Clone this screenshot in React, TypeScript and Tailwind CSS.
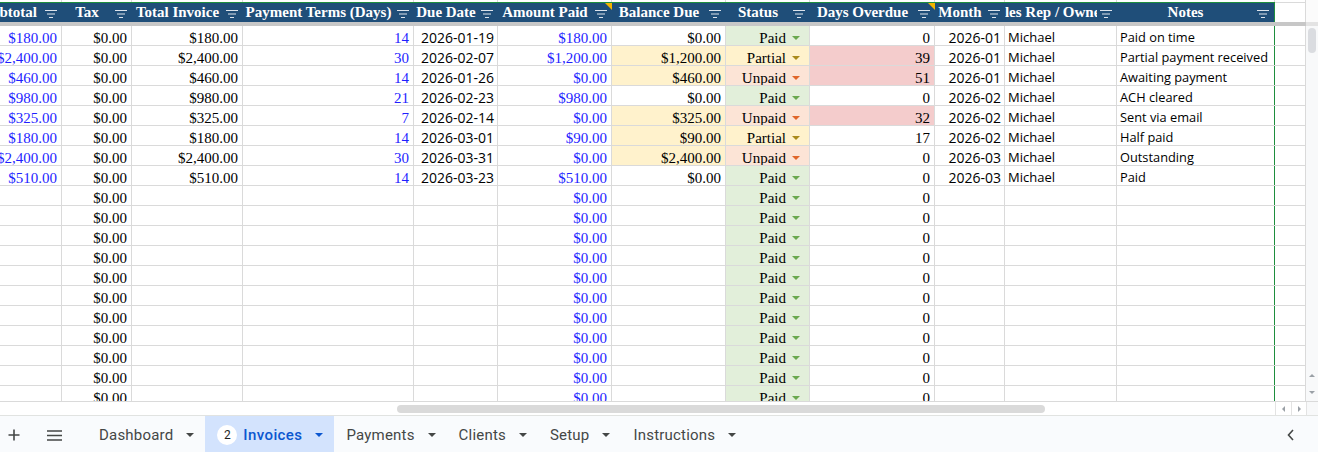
import React from "react";

const W = [
  "w-[62px]",
  "w-[70px]",
  "w-[111px]",
  "w-[171px]",
  "w-[84px]",
  "w-[114px]",
  "w-[114px]",
  "w-[84px]",
  "w-[125px]",
  "w-[70px]",
  "w-[112px]",
  "w-[158px]",
  "w-[31px]",
];

const SERIF = "font-['Liberation_Serif',serif]";
const SANS = "font-['Open_Sans',sans-serif]";
const BLUE = "text-[#1f1fff]";

type Status = "Paid" | "Partial" | "Unpaid";

type Row = {
  sub?: string;
  tax: string;
  total?: string;
  terms?: string;
  due?: string;
  paid: string;
  bal?: string;
  balHi?: boolean;
  status: Status;
  over: string;
  overHi?: boolean;
  month?: string;
  rep?: string;
  notes?: string;
};

const data: Row[] = [
  { sub: "$180.00", tax: "$0.00", total: "$180.00", terms: "14", due: "2026-01-19", paid: "$180.00", bal: "$0.00", status: "Paid", over: "0", month: "2026-01", rep: "Michael", notes: "Paid on time" },
  { sub: "$2,400.00", tax: "$0.00", total: "$2,400.00", terms: "30", due: "2026-02-07", paid: "$1,200.00", bal: "$1,200.00", balHi: true, status: "Partial", over: "39", overHi: true, month: "2026-01", rep: "Michael", notes: "Partial payment received" },
  { sub: "$460.00", tax: "$0.00", total: "$460.00", terms: "14", due: "2026-01-26", paid: "$0.00", bal: "$460.00", balHi: true, status: "Unpaid", over: "51", overHi: true, month: "2026-01", rep: "Michael", notes: "Awaiting payment" },
  { sub: "$980.00", tax: "$0.00", total: "$980.00", terms: "21", due: "2026-02-23", paid: "$980.00", bal: "$0.00", status: "Paid", over: "0", month: "2026-02", rep: "Michael", notes: "ACH cleared" },
  { sub: "$325.00", tax: "$0.00", total: "$325.00", terms: "7", due: "2026-02-14", paid: "$0.00", bal: "$325.00", balHi: true, status: "Unpaid", over: "32", overHi: true, month: "2026-02", rep: "Michael", notes: "Sent via email" },
  { sub: "$180.00", tax: "$0.00", total: "$180.00", terms: "14", due: "2026-03-01", paid: "$90.00", bal: "$90.00", balHi: true, status: "Partial", over: "17", month: "2026-02", rep: "Michael", notes: "Half paid" },
  { sub: "$2,400.00", tax: "$0.00", total: "$2,400.00", terms: "30", due: "2026-03-31", paid: "$0.00", bal: "$2,400.00", balHi: true, status: "Unpaid", over: "0", month: "2026-03", rep: "Michael", notes: "Outstanding" },
  { sub: "$510.00", tax: "$0.00", total: "$510.00", terms: "14", due: "2026-03-23", paid: "$510.00", bal: "$0.00", status: "Paid", over: "0", month: "2026-03", rep: "Michael", notes: "Paid" },
];
for (let i = 0; i < 11; i++) {
  data.push({ tax: "$0.00", paid: "$0.00", status: "Paid", over: "0" });
}

const statusBg: Record<Status, string> = {
  Paid: "bg-[#e2efda]",
  Partial: "bg-[#fff2cc]",
  Unpaid: "bg-[#fce4d6]",
};
const statusArrow: Record<Status, string> = {
  Paid: "#6aa84f",
  Partial: "#a98a1c",
  Unpaid: "#e0662a",
};

function FilterIcon() {
  return (
    <svg width="12" height="10" viewBox="0 0 12 10" className="block">
      <path d="M0 1.5h12M2 5h8M4 8.5h4" stroke="#dde4ec" strokeWidth="1.2" />
    </svg>
  );
}

function Tri({ color, w = 8, h = 4 }: { color: string; w?: number; h?: number }) {
  return (
    <svg width={w} height={h} viewBox={`0 0 ${w} ${h}`} className="block shrink-0">
      <path d={`M0 0H${w}L${w / 2} ${h}Z`} fill={color} />
    </svg>
  );
}

function HeaderCell({
  i,
  label,
  mode = "center",
  comment = false,
  shift = "",
}: {
  i: number;
  label: string;
  mode?: "center" | "end";
  comment?: boolean;
  shift?: string;
}) {
  const border = i === 11 ? "border-r border-[#1e8e3e]" : "";
  return (
    <div className={`${W[i]} ${border} shrink-0 h-full bg-[#1f4e79] flex items-center relative`}>
      <div
        className={`flex-1 min-w-0 h-full flex items-center overflow-hidden ${
          mode === "end" ? "justify-end pr-[5px]" : "justify-center"
        }`}
      >
        <span className={`whitespace-nowrap ${SERIF} font-bold text-[15px] text-white leading-none ${shift}`}>{label}</span>
      </div>
      <div className="w-[20px] shrink-0 pl-[3px] pt-[2px]">
        <FilterIcon />
      </div>
      {comment && (
        <svg width="7" height="7" viewBox="0 0 7 7" className="absolute top-0 right-0">
          <path d="M0 0H7V7Z" fill="#f4b400" />
        </svg>
      )}
    </div>
  );
}

function Cell({
  i,
  children,
  className = "",
}: {
  i: number;
  children?: React.ReactNode;
  className?: string;
}) {
  const border = i === 11 ? "border-[#1e8e3e]" : "border-[#dadada]";
  return (
    <div className={`${W[i]} shrink-0 h-full border-r ${border} flex items-center overflow-hidden whitespace-nowrap ${className}`}>
      {children}
    </div>
  );
}

function DataRow({ r }: { r: Row }) {
  const num = `${SERIF} text-[15px] leading-none justify-end pr-[4px] pt-[5px]`;
  return (
    <div className="flex h-[20px] shrink-0 border-b border-[#dadada] text-black">
      <Cell i={0} className={`${num} ${BLUE}`}>{r.sub}</Cell>
      <Cell i={1} className={num}>{r.tax}</Cell>
      <Cell i={2} className={num}>{r.total}</Cell>
      <Cell i={3} className={`${num} ${BLUE}`}>{r.terms}</Cell>
      <Cell i={4} className={`${SANS} text-[14px] leading-none justify-end pr-[3px] pt-[4px]`}>{r.due}</Cell>
      <Cell i={5} className={`${num} ${BLUE}`}>{r.paid}</Cell>
      <Cell i={6} className={`${num} ${r.balHi ? "bg-[#fff2cc]" : ""}`}>{r.bal}</Cell>
      <Cell i={7} className={`${SERIF} text-[15px] leading-none justify-end pr-[9px] gap-[6px] pt-[5px] ${statusBg[r.status]}`}>
        <span>{r.status}</span>
        <Tri color={statusArrow[r.status]} />
      </Cell>
      <Cell i={8} className={`${num} ${r.overHi ? "bg-[#f4cccc]" : ""}`}>{r.over}</Cell>
      <Cell i={9} className={`${SANS} text-[14px] leading-none justify-end pr-[3px] pt-[4px]`}>{r.month}</Cell>
      <Cell i={10} className={`${SANS} text-[13px] leading-none pl-[3px] pt-[4px]`}>{r.rep}</Cell>
      <Cell i={11} className={`${SANS} text-[12.8px] leading-none pl-[3px] pt-[4px]`}>{r.notes}</Cell>
      <Cell i={12} />
    </div>
  );
}

function PlusIcon() {
  return (
    <svg width="12" height="12" viewBox="0 0 12 12" className="block">
      <path d="M6 0.5v11M0.5 6h11" stroke="#444746" strokeWidth="1.6" />
    </svg>
  );
}
function MenuIcon() {
  return (
    <svg width="15" height="11" viewBox="0 0 15 11" className="block">
      <path d="M0 1h15M0 5.5h15M0 10h15" stroke="#444746" strokeWidth="1.6" />
    </svg>
  );
}

function Tab({ label, active = false, badge }: { label: string; active?: boolean; badge?: string }) {
  return (
    <div
      className={`h-full flex items-center pl-[12px] pr-[11px] gap-[13px] pt-[2px] ${
        active ? "bg-[#d3e3fd]" : ""
      }`}
    >
      <div className="flex items-center gap-[6px]">
        {badge && (
          <div className="w-[20px] h-[20px] rounded-full bg-white flex items-center justify-center text-[12px] text-[#1f1f1f] font-['Roboto',sans-serif]">
            {badge}
          </div>
        )}
        <span
          className={`font-['Roboto',sans-serif] text-[15px] tracking-[0.2px] ${
            active ? "text-[#0b57d0] font-medium tracking-[0.4px]" : "text-[#444746]"
          }`}
        >
          {label}
        </span>
      </div>
      <Tri color={active ? "#0b57d0" : "#444746"} w={8} h={4} />
    </div>
  );
}

export default function App() {
  return (
    <div className="w-[1318px] h-[452px] bg-white overflow-hidden flex flex-col">
      <div className="flex h-[401px] shrink-0">
        <div className="w-[1306px] shrink-0 flex flex-col overflow-hidden">
          {/* top strip of previous row */}
          <div className="flex h-[2px] shrink-0">
            {W.map((w, i) => (
              <div key={i} className={`${w} shrink-0 h-full border-r border-[#dadada]`} />
            ))}
          </div>
          {/* green table border */}
          <div className="flex h-[1px] shrink-0">
            <div className="w-[1275px] h-full bg-[#1e8e3e]" />
            <div className="w-[31px] h-full border-r border-[#dadada] bg-[#dadada]" />
          </div>
          {/* header */}
          <div className="flex h-[19px] shrink-0">
            <HeaderCell i={0} label="Subtotal" mode="end" />
            <HeaderCell i={1} label="Tax" />
            <HeaderCell i={2} label="Total Invoice" />
            <HeaderCell i={3} label="Payment Terms (Days)" />
            <HeaderCell i={4} label="Due Date" />
            <HeaderCell i={5} label="Amount Paid" comment />
            <HeaderCell i={6} label="Balance Due" />
            <HeaderCell i={7} label="Status" />
            <HeaderCell i={8} label="Days Overdue" comment />
            <HeaderCell i={9} label="Month" />
            <HeaderCell i={10} label="Sales Rep / Owner" shift="mr-[6px]" />
            <HeaderCell i={11} label="Notes" />
            <div className={`${W[12]} shrink-0 h-full border-r border-[#dadada] bg-white`} />
          </div>
          {/* frozen divider */}
          <div className="h-[4px] shrink-0 bg-[#c7c7c7]" />
          {/* rows */}
          {data.map((r, idx) => (
            <DataRow key={idx} r={r} />
          ))}
        </div>
        {/* vertical scrollbar */}
        <div className="w-[12px] shrink-0 bg-[#f8f9fa] flex flex-col items-center">
          <div className="h-[22px] w-full bg-[#fbfbfb]" />
          <div className="h-[4px] w-full bg-[#e3e3e3]" />
          <div className="mt-[2px] w-[8px] h-[25px] rounded-full bg-[#dadce0]" />
          <div className="flex-1" />
          <div className="h-[17px] w-full flex items-center justify-center">
            <svg width="6" height="3" viewBox="0 0 6 3"><path d="M0 3H6L3 0Z" fill="#9aa0a6" /></svg>
          </div>
          <div className="h-[17px] w-full flex items-center justify-center">
            <svg width="6" height="3" viewBox="0 0 6 3"><path d="M0 0H6L3 3Z" fill="#9aa0a6" /></svg>
          </div>
        </div>
      </div>
      {/* horizontal scrollbar */}
      <div className="h-[14px] shrink-0 border-t border-[#dadada] flex">
        <div className="w-[1275px] shrink-0 h-full flex items-center">
          <div className="ml-[397px] w-[648px] h-[8px] rounded-full bg-[#dadada]" />
        </div>
        <div className="w-[16px] shrink-0 h-full border-l border-[#e3e3e3] flex items-center justify-center">
          <svg width="3" height="6" viewBox="0 0 3 6"><path d="M3 0V6L0 3Z" fill="#9aa0a6" /></svg>
        </div>
        <div className="w-[15px] shrink-0 h-full border-l border-[#e3e3e3] flex items-center justify-center">
          <svg width="3" height="6" viewBox="0 0 3 6"><path d="M0 0V6L3 3Z" fill="#9aa0a6" /></svg>
        </div>
        <div className="flex-1 h-full border-l border-[#e3e3e3] bg-[#f8f9fa]" />
      </div>
      {/* sheet tabs */}
      <div className="h-[37px] shrink-0 border-t border-[#e1e3e1] bg-[#f9fbfd] flex items-center">
        <div className="w-[28px] shrink-0 flex justify-center pt-[2px]">
          <PlusIcon />
        </div>
        <div className="w-[52px] shrink-0 flex justify-center pt-[2px]">
          <MenuIcon />
        </div>
        <div className="w-[7px] shrink-0" />
        <Tab label="Dashboard" />
        <Tab label="Invoices" active badge="2" />
        <Tab label="Payments" />
        <Tab label="Clients" />
        <Tab label="Setup" />
        <Tab label="Instructions" />
        <div className="flex-1" />
        <div className="w-[56px] flex justify-center pt-[2px]">
          <svg width="7" height="12" viewBox="0 0 7 12" className="block">
            <path d="M6 1L1.5 6L6 11" stroke="#444746" strokeWidth="1.6" fill="none" />
          </svg>
        </div>
      </div>
    </div>
  );
}
